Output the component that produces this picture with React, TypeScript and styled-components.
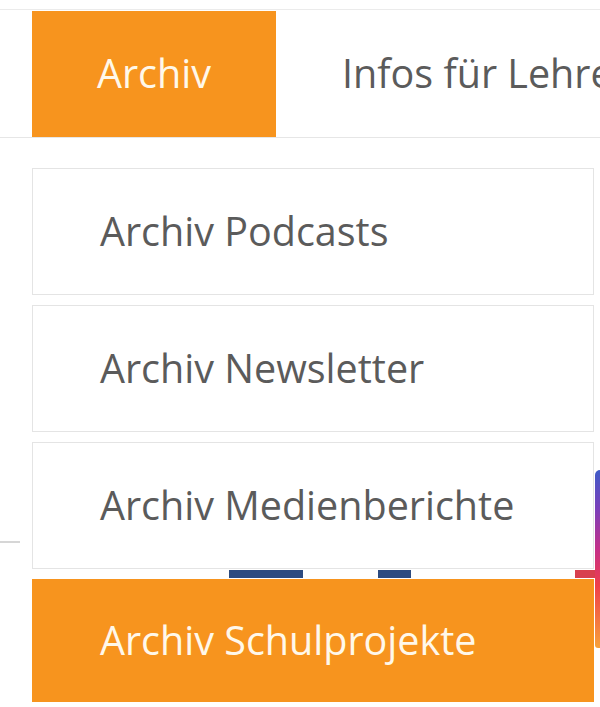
import React from "react";
import styled, { createGlobalStyle } from "styled-components";

const GlobalStyle = createGlobalStyle`
  html, body {
    margin: 0;
    padding: 0;
    background: #ffffff;
  }
  body {
    font-family: "Open Sans", "Liberation Sans", sans-serif;
    overflow: hidden;
  }
`;

const Page = styled.div`
  position: relative;
  width: 600px;
  height: 707px;
  overflow: hidden;
  background: #ffffff;
`;

const NavBar = styled.nav`
  display: flex;
  align-items: stretch;
  margin-top: 9px;
  padding: 1px 0 0 32px;
  border-top: 1px solid #ebebeb;
  border-bottom: 1px solid #e6e6e6;
  white-space: nowrap;
`;

const NavItem = styled.div<{ active?: boolean }>`
  display: flex;
  align-items: center;
  flex-shrink: 0;
  box-sizing: border-box;
  height: 126px;
  padding: 0 0 2px ${({ active }) => (active ? "65px" : "66px")};
  width: ${({ active }) => (active ? "244px" : "auto")};
  background: ${({ active }) => (active ? "#f7941e" : "transparent")};
  color: ${({ active }) => (active ? "#fff8ea" : "#5b5b5b")};
  font-size: 39.5px;
`;

const Content = styled.div`
  display: flex;
  height: 569px;
`;

const LeftColumn = styled.div`
  flex: 1;
  display: flex;
  flex-direction: column;
`;

const Divider = styled.div`
  width: 20px;
  height: 2px;
  margin-top: 403px;
  background: #d6d6d6;
`;

const SocialRow = styled.div`
  display: flex;
  margin-top: 27px;
  height: 8px;
`;

const SocialBar = styled.div<{ offset: number; width: number; color: string }>`
  margin-left: ${({ offset }) => offset}px;
  width: ${({ width }) => width}px;
  height: 8px;
  background: ${({ color }) => color};
`;

const GradientEdge = styled.div`
  width: 6px;
  height: 178px;
  margin-top: 332px;
  border-top-left-radius: 5px;
  border-bottom-left-radius: 3px;
  background: linear-gradient(
    180deg,
    #3f5bc8 0%,
    #7b3fba 22%,
    #c62f87 45%,
    #ef3f4a 65%,
    #f7a23a 100%
  );
`;

const Dropdown = styled.ul`
  position: absolute;
  top: 168px;
  left: 32px;
  width: 562px;
  margin: 0;
  padding: 0;
  list-style: none;
  display: flex;
  flex-direction: column;
  gap: 10px;
`;

const DropdownItem = styled.li<{ active?: boolean }>`
  display: flex;
  align-items: center;
  box-sizing: border-box;
  height: ${({ active }) => (active ? "123px" : "127px")};
  padding: 0 0 2px 67px;
  background: ${({ active }) => (active ? "#f7941e" : "#ffffff")};
  border: 1px solid ${({ active }) => (active ? "#f7941e" : "#e4e4e4")};
  color: ${({ active }) => (active ? "#fff8ea" : "#5b5b5b")};
  font-size: 39.5px;
  white-space: nowrap;
`;

const menu = [
  { label: "Archiv Podcasts" },
  { label: "Archiv Newsletter" },
  { label: "Archiv Medienberichte" },
  { label: "Archiv Schulprojekte", active: true },
];

export default function App() {
  return (
    <Page>
      <GlobalStyle />
      <NavBar>
        <NavItem active>Archiv</NavItem>
        <NavItem>Infos für Lehrer</NavItem>
      </NavBar>
      <Content>
        <LeftColumn>
          <Divider />
          <SocialRow>
            <SocialBar offset={229} width={74} color="#2d4b80" />
            <SocialBar offset={75} width={33} color="#2d4b80" />
            <SocialBar offset={164} width={20} color="#d8404f" />
          </SocialRow>
        </LeftColumn>
        <GradientEdge />
      </Content>
      <Dropdown>
        {menu.map((item) => (
          <DropdownItem key={item.label} active={item.active}>
            {item.label}
          </DropdownItem>
        ))}
      </Dropdown>
    </Page>
  );
}
